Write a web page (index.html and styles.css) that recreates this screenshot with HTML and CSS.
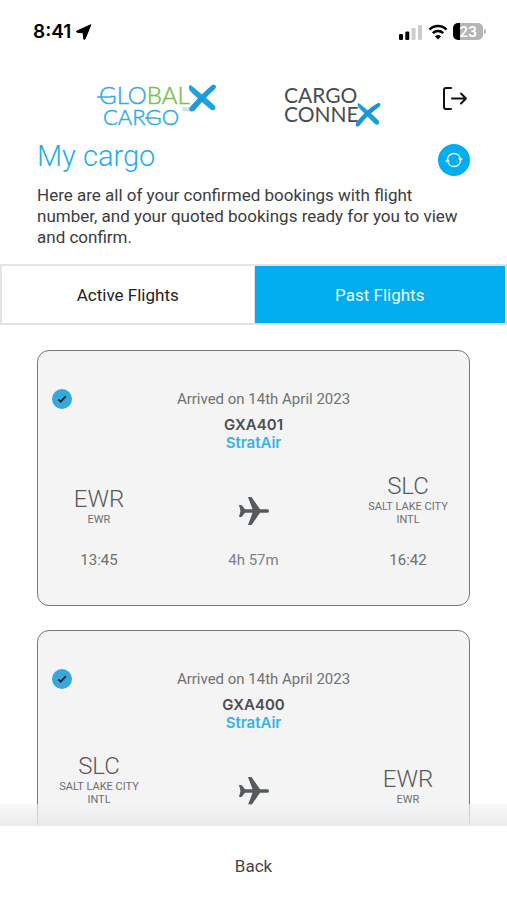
FILE: index.html
```html
<!DOCTYPE html>
<html lang="en">
<head>
  <meta charset="utf-8">
  <meta name="viewport" content="width=device-width, initial-scale=1.0">
  <title>My cargo</title>
  <link rel="stylesheet" href="styles.css">
</head>
<body>

  <!-- Status bar -->
  <div class="status-bar">
    <div class="status-left">
      <span class="clock">8:41</span>
      <svg width="16" height="16" viewBox="0 0 16 16" aria-hidden="true">
        <path d="M14.900 .7 9 15c-.3.7-1.200.6-1.300-.2L7.200 8.800 1.200 8.300C.4 8.200.3 7.300 1 7Z" fill="#000" stroke="#000" stroke-linejoin="round"/>
      </svg>
    </div>
    <div class="status-right">
      <svg width="24" height="16" viewBox="0 0 24 16" aria-hidden="true">
        <rect x="0" y="10" width="4" height="6" rx="1.300" fill="#000"/>
        <rect x="6.300" y="7.500" width="4" height="8.500" rx="1.300" fill="#000"/>
        <rect x="12.600" y="4" width="4" height="12" rx="1.300" fill="#ccc"/>
        <rect x="19" y="1" width="4" height="15" rx="1.300" fill="#ccc"/>
      </svg>
      <svg width="20" height="16" viewBox="0 0 20 16" aria-hidden="true">
        <path d="M1.500 5.600a12 12 0 0 1 17 0M4.800 9.100a7.400 7.400 0 0 1 10.400 0" fill="none" stroke="#000" stroke-width="2.500"/>
        <path d="M10 15.500 7 12.400a4.300 4.300 0 0 1 6 0Z" fill="#000"/>
      </svg>
      <div class="battery">23</div>
    </div>
  </div>

  <!-- Logos -->
  <header class="header">
    <svg class="logo" width="122" height="44" viewBox="0 0 122 44" role="img" aria-label="Global X Cargo">
      <text x="2" y="20" class="logo-thin blue">GLO<tspan class="green">BAL</tspan></text>
      <text x="6" y="41" class="logo-thin small blue">CARGO</text>
      <path d="M0 13h14M48 34h11" stroke="#35ace0" stroke-width="1.500"/>
      <text x="85" y="27" class="logo-mark">SM</text>
      <path d="M95 2C102 8 111 15 118 22C120 25 116 28 113 25C106 19 99 13 93 7C91 3 92 0 95 2Z" fill="#1ba4de"/>
      <path d="M115 1C119 0 120 3 118 5C110 12 104 19 98 26C94 29 91 27 93 23C100 15 107 8 115 1Z" fill="#1b9bd9"/>
    </svg>
    <svg class="logo" width="100" height="44" viewBox="0 0 100 44" role="img" aria-label="Cargo Connex">
      <text x="3" y="19" class="logo-dark">CARGO</text>
      <text x="3" y="38" class="logo-dark">CONNE</text>
      <path d="M79 20C86 25 92 31 98 37C99 40 96 42 94 40C88 34 83 29 78 24C76 21 76 18 79 20Z" fill="#1ba0dc"/>
      <path d="M97 19C100 19 100 21 98 23C91 28 84 34 79 41C76 44 74 42 75 39C81 31 88 24 97 19Z" fill="#1b93d4"/>
    </svg>
    <button class="logout" aria-label="Log out">
      <svg width="26" height="26" viewBox="0 0 26 26" fill="none" stroke="#111" stroke-width="2" stroke-linecap="round" stroke-linejoin="round">
        <path d="M9 2H4Q2 2 2 4V21Q2 23 4 23H9M10 12.500H24M19 7.500l5 5-5 5"/>
      </svg>
    </button>
  </header>

  <main class="content">
    <section class="intro">
      <div class="title-row">
        <h1>My cargo</h1>
        <button class="refresh" aria-label="Refresh">
          <svg width="18" height="18" viewBox="0 0 18 18" fill="none" stroke="#fff" stroke-width="1.300">
            <path d="M2.500 8.500a6.500 6.500 0 0 1 12.900-.5M15.500 9.500a6.500 6.500 0 0 1-12.900.5"/>
            <path d="M13 7.500h5l-2.500 3ZM0 10.500h5l-2.500-3Z" fill="#fff" stroke="none"/>
          </svg>
        </button>
      </div>
      <p>Here are all of your confirmed bookings with flight number, and your quoted bookings ready for you to view and confirm.</p>
    </section>

    <div class="tabs">
      <button class="tab">Active Flights</button>
      <button class="tab active">Past Flights</button>
    </div>

    <div class="flights">
      <article class="card">
        <div class="card-top">
          <svg class="check" width="20" height="20" viewBox="0 0 20 20" aria-hidden="true">
            <circle cx="10" cy="10" r="10" fill="#35a8e0"/>
            <path d="M6.300 10.300 8.700 12.700 13.700 7.300" fill="none" stroke="#222" stroke-width="1.800"/>
          </svg>
          <p>Arrived on 14th April 2023</p>
        </div>
        <h2>GXA401</h2>
        <h3>StratAir</h3>
        <div class="route">
          <div class="airport">
            <div class="code">EWR</div>
            <div class="city">EWR</div>
          </div>
          <svg class="plane" width="32" height="30" viewBox="0 0 32 30" aria-hidden="true">
            <path d="M1 9h2.500l3.500 4.200h7.500L10 1h3.500L22 13.200h7.500Q31 13.200 31 15T29.500 16.800H22L13.500 29H10l4.500-12.200H7L3.500 21H1l1.500-6Z" fill="#555a5c"/>
          </svg>
          <div class="airport">
            <div class="code">SLC</div>
            <div class="city">SALT LAKE CITY INTL</div>
          </div>
          <div class="time">13:45</div>
          <div class="time duration">4h 57m</div>
          <div class="time">16:42</div>
        </div>
      </article>

      <article class="card">
        <div class="card-top">
          <svg class="check" width="20" height="20" viewBox="0 0 20 20" aria-hidden="true">
            <circle cx="10" cy="10" r="10" fill="#35a8e0"/>
            <path d="M6.300 10.300 8.700 12.700 13.700 7.300" fill="none" stroke="#222" stroke-width="1.800"/>
          </svg>
          <p>Arrived on 14th April 2023</p>
        </div>
        <h2>GXA400</h2>
        <h3>StratAir</h3>
        <div class="route">
          <div class="airport">
            <div class="code">SLC</div>
            <div class="city">SALT LAKE CITY INTL</div>
          </div>
          <svg class="plane" width="32" height="30" viewBox="0 0 32 30" aria-hidden="true">
            <path d="M1 9h2.500l3.500 4.200h7.500L10 1h3.500L22 13.200h7.500Q31 13.200 31 15T29.500 16.800H22L13.500 29H10l4.500-12.200H7L3.500 21H1l1.500-6Z" fill="#555a5c"/>
          </svg>
          <div class="airport">
            <div class="code">EWR</div>
            <div class="city">EWR</div>
          </div>
        </div>
      </article>
    </div>
  </main>

  <footer class="footer">
    <button class="back">Back</button>
  </footer>

</body>
</html>
```
FILE: styles.css
```css
* {
  box-sizing: border-box;
  font-family: Roboto, sans-serif;
}

body {
  display: flex;
  flex-direction: column;
  height: 100vh;
  margin: 0;
  background-color: #fff;
  color: #3c3c3e;
}

h1, h2, h3, p {
  margin: 0;
}

button {
  border: none;
  padding: 0;
  background: none;
  cursor: pointer;
}

/* Status bar */
.status-bar {
  display: flex;
  justify-content: space-between;
  align-items: center;
  flex-shrink: 0;
  height: 63px;
  padding: 0 24px 0 33px;
}

.status-left, .status-right {
  display: flex;
  align-items: center;
  gap: 5px;
}

.clock {
  font-family: Inter, sans-serif;
  font-size: 19px;
  font-weight: 600;
  color: #000;
}

.battery {
  position: relative;
  width: 30px;
  height: 17px;
  border-radius: 5px;
  background: linear-gradient(to right, #000 7px, #b5b5b5 7px);
  color: #fff;
  font-family: Inter, sans-serif;
  font-size: 14px;
  font-weight: 600;
  line-height: 17px;
  text-align: center;
}

.battery::after {
  content: "";
  position: absolute;
  top: 6px;
  right: -3px;
  width: 2px;
  height: 5px;
  border-radius: 0 2px 2px 0;
  background-color: #b5b5b5;
}

/* Header */
.header {
  display: flex;
  justify-content: space-between;
  align-items: center;
  flex-shrink: 0;
  height: 77px;
  padding: 8px 39px 0 97px;
}

.logo {
  overflow: visible;
}

.logo-thin {
  font-family: Lato, sans-serif;
  font-size: 24px;
  font-weight: 300;
}

.logo-thin.small {
  font-size: 22px;
}

.logo-thin, .logo-thin tspan {
  font-family: Lato, sans-serif;
  stroke-width: 0.5px;
}

.blue {
  fill: #35ace0;
  stroke: #35ace0;
}

.green {
  fill: #7fc04c;
  stroke: #7fc04c;
}

.logo-dark {
  font-family: Lato, sans-serif;
  font-size: 21px;
  fill: #4a4c50;
}

.logo-mark {
  font-size: 5px;
  fill: #7fb9dc;
}

.logout {
  display: flex;
  margin-top: -13px;
}

/* Main */
.content {
  flex: 1;
  min-height: 0;
  overflow-y: auto;
  scrollbar-width: none;
}

.intro {
  padding: 0 37px 16px;
}

.title-row {
  display: flex;
  justify-content: space-between;
  align-items: center;
  height: 32px;
}

h1 {
  color: #1caeeb;
  font-size: 29px;
  font-weight: 300;
}

.refresh {
  display: flex;
  justify-content: center;
  align-items: center;
  width: 32px;
  height: 32px;
  margin-top: 8px;
  border-radius: 50%;
  background-color: #00aeef;
}

.intro p {
  margin-top: 13px;
  font-size: 17px;
  line-height: 21px;
}

.tabs {
  display: grid;
  grid-template-columns: 1fr 1fr;
  border: 2px solid #e4e4e6;
}

.tab {
  height: 57px;
  color: #222;
  font-size: 17px;
}

.tab.active {
  border-left: 1px solid #e4e4e6;
  background-color: #00aeef;
  color: #e8f8ff;
}

.flights {
  display: flex;
  flex-direction: column;
  gap: 24px;
  padding: 25px 37px;
}

/* Flight card */
.card {
  min-height: 256px;
  padding: 38px 14px 35px;
  border: 1px solid #77787a;
  border-radius: 12px;
  background-color: #f4f4f5;
  text-align: center;
}

.card-top {
  display: flex;
  align-items: center;
}

.card-top p {
  flex: 1;
  color: #707173;
  font-size: 15px;
  line-height: 20px;
}

.card h2, .card h3 {
  font-family: Inter, sans-serif;
  font-size: 15px;
  font-weight: 600;
  line-height: 18px;
}

.card h2 {
  margin-top: 7px;
  color: #4c4d50;
}

.card h3 {
  color: #35b4e6;
}

.route {
  display: grid;
  grid-template-columns: 94px 1fr 94px;
  align-items: end;
  margin-top: 20px;
}

.plane {
  justify-self: center;
}

.code {
  color: #58595b;
  font-size: 24px;
  font-weight: 300;
  line-height: 28px;
}

.city {
  color: #6d6e70;
  font-size: 11px;
  line-height: 13px;
}

.time {
  margin-top: 24px;
  color: #6d6e70;
  font-size: 15px;
  line-height: 20px;
}

.duration {
  color: #808184;
}

/* Footer */
.footer {
  position: relative;
  display: flex;
  justify-content: center;
  align-items: center;
  flex-shrink: 0;
  height: 74px;
  background-color: #fff;
}

/* fade over the scrolled list */
.footer::before {
  content: "";
  position: absolute;
  right: 0;
  bottom: 100%;
  left: 0;
  height: 22px;
  background: linear-gradient(to bottom, rgba(244, 244, 245, 0.6), rgba(232, 233, 235, 0.9));
}

.back {
  padding: 10px 20px;
  margin-top: 6px;
  color: #444;
  font-size: 17px;
}
```
